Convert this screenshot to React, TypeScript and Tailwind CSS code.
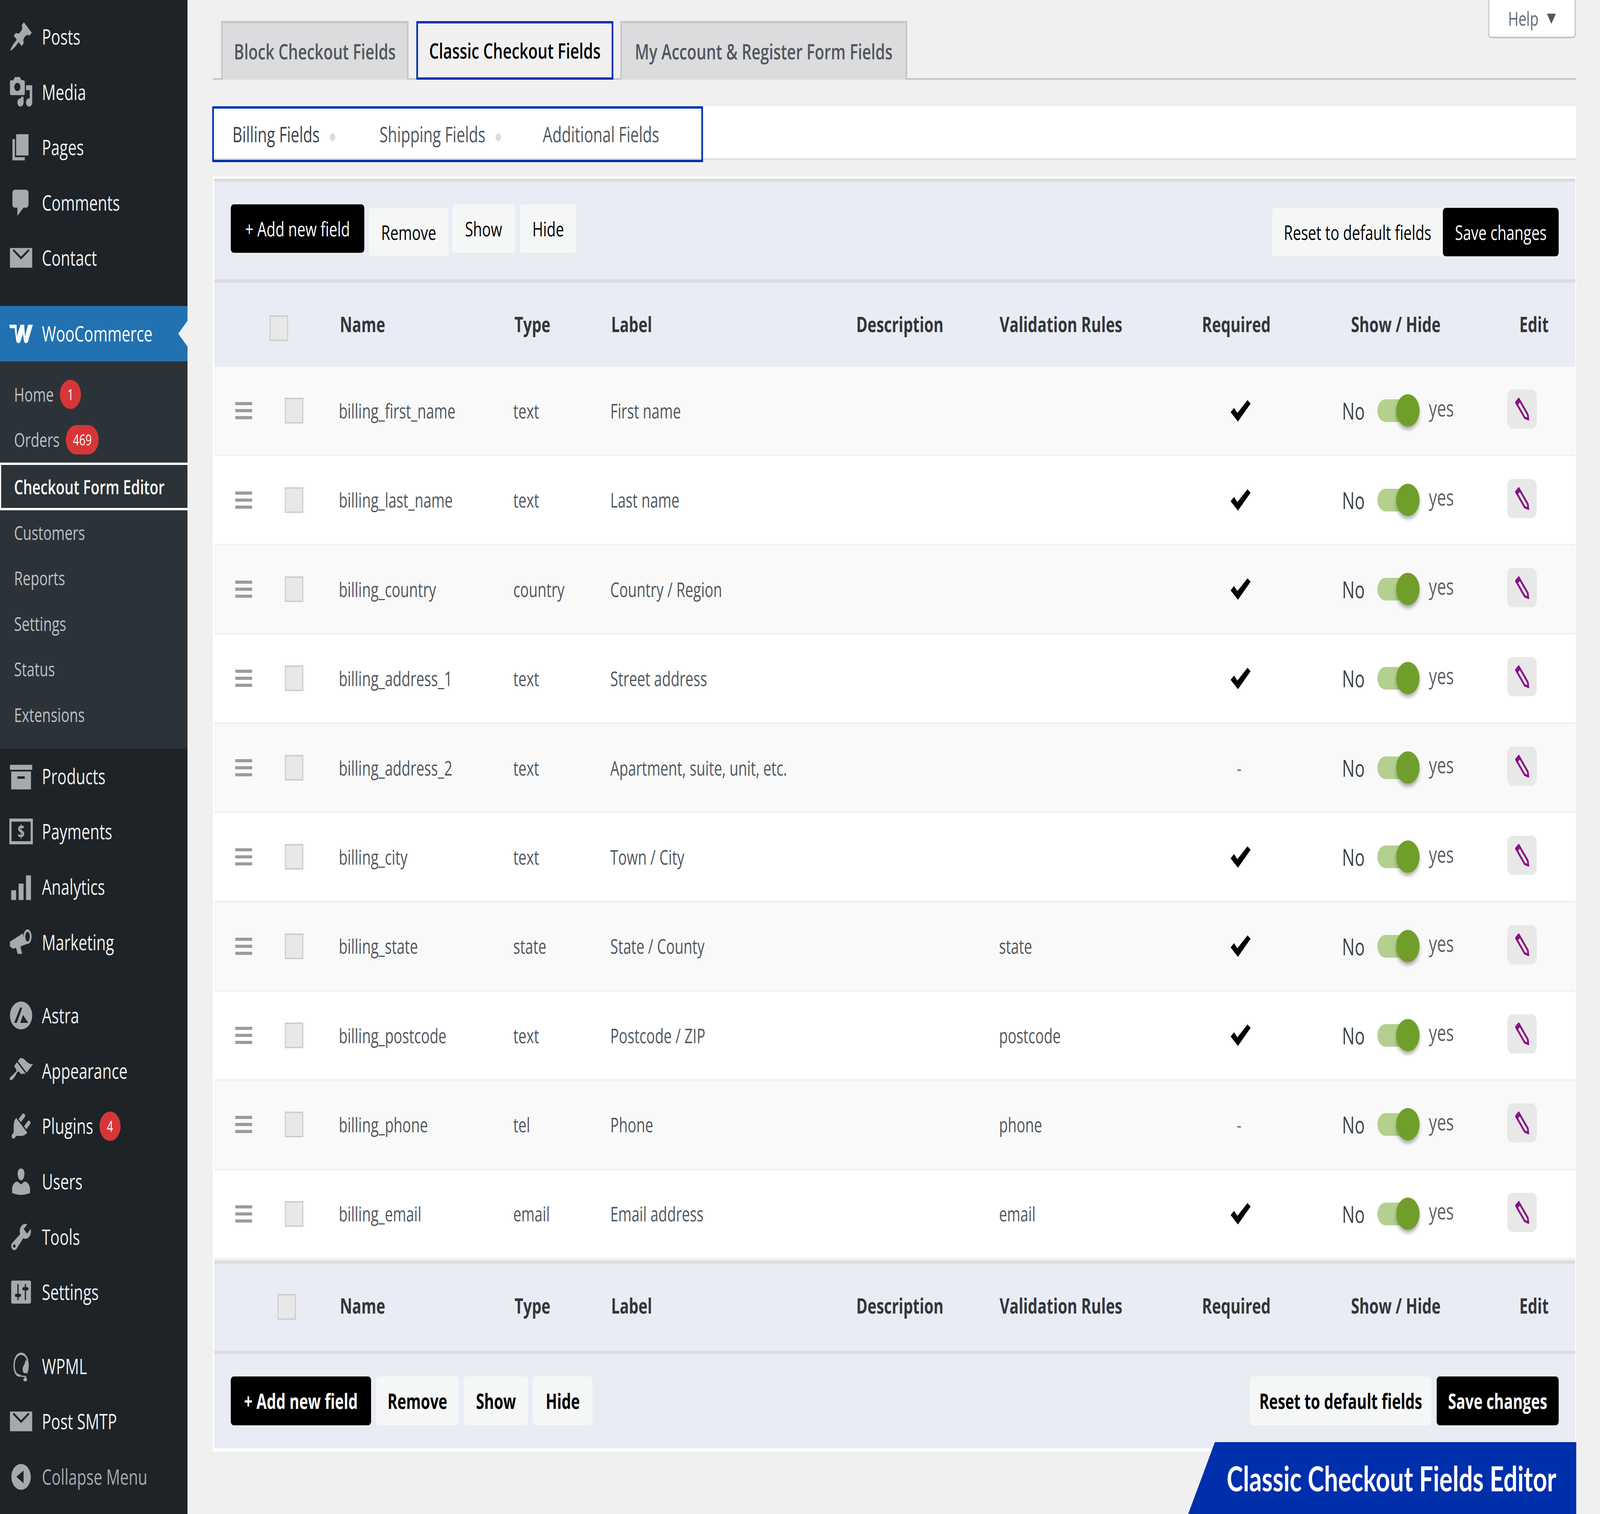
import type { ReactNode } from "react";

const paths: Record<string, string> = {
  posts:
    "M10.44 3.02l1.82-1.82 6.36 6.35-1.83 1.82c-1.05-.68-2.48-.57-3.41.36l-.75.75c-.92.93-1.04 2.35-.35 3.41l-1.83 1.82-2.41-2.41-2.8 2.79c-.42.42-3.38 2.71-3.8 2.29s1.86-3.39 2.28-3.81l2.79-2.79L4.1 9.36l1.83-1.82c1.05.69 2.48.57 3.4-.36l.75-.75c.93-.92 1.05-2.35.36-3.41z",
  media:
    "M13 11V4c0-.55-.45-1-1-1h-1.67L9 1H5L3.67 3H2c-.55 0-1 .45-1 1v7c0 .55.45 1 1 1h10c.55 0 1-.45 1-1zM7 4.5c1.38 0 2.5 1.12 2.5 2.5S8.38 9.5 7 9.5 4.5 8.38 4.5 7 5.62 4.5 7 4.5zM14 6h5v10.5c0 1.38-1.12 2.5-2.5 2.5S14 17.88 14 16.5s1.12-2.5 2.5-2.5c.17 0 .34.02.5.05V9h-3V6zm-4 8.05V13h2v3.5c0 1.38-1.12 2.5-2.5 2.5S7 17.88 7 16.5 8.12 14 9.5 14c.17 0 .34.02.5.05z",
  pages: "M6 15V2h10v13H6zm-1 1h8v2H3V5h2v11z",
  comments:
    "M5 2h9c1.1 0 2 .9 2 2v7c0 1.1-.9 2-2 2h-2l-5 5v-5H5c-1.1 0-2-.9-2-2V4c0-1.1.9-2 2-2z",
  email:
    "M1 4h18v12H1zM3.200 5.600l6.800 5.400 6.800-5.400-.9-.9-5.900 4.600-5.900-4.600z",
  products: "M19 3v3H1V3h18zM2 7h16v11H2V7zm5 3v1.500h6V10H7z",
  analytics: "M2 12h4v6H2zM8 8h4v10H8zM14 3h4v15h-4z",
  marketing:
    "M1 9.500L11.500 4.500c.4 3 1.400 5 3 6.500l-5 1.500 1.300 4.500H7.300l-1.400-3.700-2.400.6L1 12.500zM12 6.500c0-2.400 1.400-4.500 3.200-4.500s3.300 2.100 3.300 4.500-1.500 4.500-3.300 4.500S12 8.900 12 6.500zm1.400 0c0 1.600.8 3 1.800 3s1.900-1.400 1.900-3-.9-3-1.900-3-1.800 1.400-1.800 3z",
  astra:
    "M10 1.500a9 8.500 0 100 17 9 8.500 0 000-17zM9.200 5.200h1.800L6.600 14.500H4.400zM11.600 9.700l4.200 4.800H9.300z",
  appearance:
    "M14.480 11.060L7.410 3.990l1.500-1.500c.5-.56 2.300-.47 3.510.32 1.210.8 1.430 1.280 2.910 2.100 1.180.64 2.450 1.260 4.450.85zm-.71.71L6.700 4.700 4.930 6.470c-.39.39-.39 1.020 0 1.410l1.060 1.060c.39.39.39 1.030 0 1.420-.6.6-1.430 1.110-2.210 1.690-.35.26-.7.53-1.010.84C1.430 13.230.4 14.750 1.100 15.500c.7.7 2.200-.35 3.500-1.670.3-.3.57-.65.83-1 .58-.78 1.090-1.610 1.690-2.210.39-.39 1.020-.39 1.410 0l1.060 1.060c.39.39 1.030.39 1.420 0z",
  plugins:
    "M13.110 4.360L9.870 7.600 8 5.730l3.240-3.240c.35-.34 1.050-.2 1.560.32.52.51.66 1.210.31 1.550zm-8 1.770l.91-1.120 9.010 9.010-1.190.84c-.71.71-2.630 1.160-3.820 1.160H6.140L4.900 17.260c-.59.59-1.540.59-2.120 0-.59-.58-.59-1.530 0-2.120l1.240-1.240v-3.880c0-1.130.4-3.190 1.090-3.890zm7.260 3.970l3.240-3.240c.34-.35 1.040-.21 1.550.31.52.51.66 1.210.31 1.550l-3.240 3.250z",
  users:
    "M10 9.250c-2.270 0-2.730-3.440-2.730-3.440C7 4.020 7.820 2 9.970 2c2.160 0 2.980 2.020 2.710 3.810 0 0-.41 3.440-2.680 3.440zm0 2.570L12.720 10c2.390 0 4.520 2.330 4.520 4.530v2.490s-3.650 1.130-7.240 1.130c-3.650 0-7.240-1.130-7.240-1.130v-2.490c0-2.250 1.940-4.480 4.470-4.480z",
  tools:
    "M16.680 9.770c-1.340 1.340-3.300 1.670-4.950.99l-5.410 6.520c-.99.99-2.590.99-3.580 0s-.99-2.590 0-3.570l6.520-5.420c-.68-1.650-.35-3.610.99-4.950 1.280-1.280 3.120-1.620 4.720-1.060l-2.890 2.890 2.820 2.820 2.860-2.870c.53 1.580.18 3.390-1.080 4.650zM3.810 16.210c.4.39 1.040.39 1.430 0 .4-.4.4-1.040 0-1.430-.39-.4-1.030-.4-1.430 0-.39.39-.39 1.030 0 1.430z",
  settings:
    "M18 16V4c0-.55-.45-1-1-1H3c-.55 0-1 .45-1 1v12c0 .55.45 1 1 1h14c.55 0 1-.45 1-1zM8 11h1c.55 0 1 .45 1 1s-.45 1-1 1H8v1.500c0 .28-.22.5-.5.5s-.5-.22-.5-.5V13H6c-.55 0-1-.45-1-1s.45-1 1-1h1V5.500c0-.28.22-.5.5-.5s.5.22.5.5V11zm5-2h-1c-.55 0-1-.45-1-1s.45-1 1-1h1V5.500c0-.28.22-.5.5-.5s.5.22.5.5V7h1c.55 0 1 .45 1 1s-.45 1-1 1h-1v5.500c0 .28-.22.5-.5.5s-.5-.22-.5-.5V9z",
  collapse:
    "M10 2.160c4.330 0 7.840 3.510 7.840 7.840s-3.510 7.840-7.840 7.840S2.160 14.330 2.160 10 5.710 2.160 10 2.160zm2 11.720V6.120L6.180 9.970z",
};

function MenuIcon({ name }: { name: string }) {
  if (name === "woo") {
    return (
      <svg viewBox="0 0 84 50" className="ml-[2px] h-[50px] w-[84px]" fill="#fff">
        <path d="M0 2h26l1 30L40 2h13l3 30L67 2h17L66 46c-3 5-12 4-14-2l-3-18-10 20c-3 5-12 4-14-2L19 11H4c-3 0-4-5-4-9z" />
      </svg>
    );
  }
  if (name === "payments") {
    return (
      <svg viewBox="0 0 84 66" className="ml-[2px] h-[66px] w-[84px]">
        <rect x="4" y="4" width="76" height="58" fill="none" stroke="#a7aaad" strokeWidth="8" />
        <text x="42" y="49" textAnchor="middle" fontSize="44" fontWeight="700" fontFamily="'Open Sans', sans-serif" fill="#a7aaad">
          $
        </text>
      </svg>
    );
  }
  if (name === "wpml") {
    return (
      <svg viewBox="0 0 20 20" className="ml-[13px] h-[80px] w-[62px]" preserveAspectRatio="none">
        <path d="M9 16C4.500 16 2 13.500 2 9.500S5 2 10 2s8 3 8 7.500c0 2-.6 3.800-2 5" fill="none" stroke="#a7aaad" strokeWidth="1.500" />
        <path d="M18 9c0 3-1.500 5-3.500 5.500-2.500 0-3.500-2.500-2-4.500 1-1 2-1.500 2.500-4 2 .5 3 1.500 3 3z" fill="#a7aaad" />
        <path d="M9 16c2 .5 5 .5 7 .5M13 18.500c1-1.500 3-1.500 3.500 0-.5 1-3 1-3.500 0z" fill="#a7aaad" stroke="#a7aaad" strokeWidth=".8" />
      </svg>
    );
  }
  return (
    <svg viewBox="0 0 20 20" className="h-[84px] w-[88px]" preserveAspectRatio="none" fill="#a7aaad">
      <path d={paths[name]} fillRule={name === "astra" || name === "email" ? "evenodd" : undefined} />
    </svg>
  );
}

function Badge({ children, wide }: { children: string; wide?: boolean }) {
  return (
    <span
      className={`ml-[22px] flex h-[75px] items-center justify-center rounded-full bg-[#d63638] text-[39px] text-white ${
        wide ? "w-[117px]" : "w-[75px]"
      }`}
    >
      {children}
    </span>
  );
}

function MenuItem({
  icon,
  label,
  badge,
  dim,
}: {
  icon: string;
  label: string;
  badge?: string;
  dim?: boolean;
}) {
  return (
    <div className="flex h-[141.6px] items-center">
      <span className="flex w-[149px] shrink-0 pl-[31px]">
        <MenuIcon name={icon} />
      </span>
      <span className={dim ? "text-[#a7aaad]" : "text-[#f0f0f1]"}>{label}</span>
      {badge && <Badge>{badge}</Badge>}
    </div>
  );
}

function SubItem({ label, badge }: { label: string; badge?: string }) {
  return (
    <div className="flex h-[116.500px] items-center pl-[50px] text-[#bcc0c4]">
      {label}
      {badge && <Badge wide={badge.length > 1}>{badge}</Badge>}
    </div>
  );
}

function Sidebar() {
  return (
    <aside className="relative z-10 w-[667px] shrink-0 bg-[#1d2327] text-[54.500px]">
      <div className="pt-[23px]">
        <MenuItem icon="posts" label="Posts" />
        <MenuItem icon="media" label="Media" />
        <MenuItem icon="pages" label="Pages" />
        <MenuItem icon="comments" label="Comments" />
        <MenuItem icon="email" label="Contact" />
      </div>
      <div className="relative mt-[52px] flex h-[142px] items-center bg-[#2271b1] text-white">
        <span className="flex w-[149px] shrink-0 pl-[31px]">
          <MenuIcon name="woo" />
        </span>
        WooCommerce
        <span className="absolute right-0 top-[38px] h-0 w-0 border-y-[33px] border-r-[33px] border-y-transparent border-r-[#f0f0f1]" />
      </div>
      <div className="h-[991px] bg-[#2c3338] pt-[26px] text-[50px]">
        <SubItem label="Home" badge="1" />
        <SubItem label="Orders" badge="469" />
        <div className="-mb-px flex h-[122px] w-[671px] items-center border-x-[4px] border-y-[6px] border-white pl-[46px] text-[51px] font-semibold text-white">
          Checkout Form Editor
        </div>
        <SubItem label="Customers" />
        <SubItem label="Reports" />
        <SubItem label="Settings" />
        <SubItem label="Status" />
        <SubItem label="Extensions" />
      </div>
      <div>
        <MenuItem icon="products" label="Products" />
        <MenuItem icon="payments" label="Payments" />
        <MenuItem icon="analytics" label="Analytics" />
        <MenuItem icon="marketing" label="Marketing" />
      </div>
      <div className="mt-[46px]">
        <MenuItem icon="astra" label="Astra" />
        <MenuItem icon="appearance" label="Appearance" />
        <MenuItem icon="plugins" label="Plugins" badge="4" />
        <MenuItem icon="users" label="Users" />
        <MenuItem icon="tools" label="Tools" />
        <MenuItem icon="settings" label="Settings" />
      </div>
      <div className="mt-[48px]">
        <MenuItem icon="wpml" label="WPML" />
        <MenuItem icon="email" label="Post SMTP" />
        <MenuItem icon="collapse" label="Collapse Menu" dim />
      </div>
    </aside>
  );
}

const cols =
  "grid grid-cols-[251px_192px_621px_345px_875px_508px_722px_498px_588px_242px]";

const fields = [
  { name: "billing_first_name", type: "text", label: "First name", rule: "", req: true },
  { name: "billing_last_name", type: "text", label: "Last name", rule: "", req: true },
  { name: "billing_country", type: "country", label: "Country / Region", rule: "", req: true },
  { name: "billing_address_1", type: "text", label: "Street address", rule: "", req: true },
  { name: "billing_address_2", type: "text", label: "Apartment, suite, unit, etc.", rule: "", req: false },
  { name: "billing_city", type: "text", label: "Town / City", rule: "", req: true },
  { name: "billing_state", type: "state", label: "State / County", rule: "state", req: true },
  { name: "billing_postcode", type: "text", label: "Postcode / ZIP", rule: "postcode", req: true },
  { name: "billing_phone", type: "tel", label: "Phone", rule: "phone", req: false },
  { name: "billing_email", type: "email", label: "Email address", rule: "email", req: true },
];

function CheckBox({ className = "" }: { className?: string }) {
  return (
    <span className={`block h-[66px] w-[66px] border-[4px] border-[#cfcfd0] bg-[#e8e8e8] ${className}`} />
  );
}

function HeadRow({ boxOffset, textShift }: { boxOffset: string; textShift: string }) {
  return (
    <div className={`${cols} items-center bg-[#e9ecf4] text-[54px] font-bold text-[#32373c]`}>
      <div className={boxOffset}>
        <CheckBox />
      </div>
      <div />
      <div className={`pl-1 ${textShift}`}>Name</div>
      <div className={`pl-1 ${textShift}`}>Type</div>
      <div className={`pl-[3px] ${textShift}`}>Label</div>
      <div className={textShift}>Description</div>
      <div className={`pl-[2px] ${textShift}`}>Validation Rules</div>
      <div className={textShift}>Required</div>
      <div className={`pl-[32px] ${textShift}`}>Show / Hide</div>
      <div className={`pl-[43px] ${textShift}`}>Edit</div>
    </div>
  );
}

function CheckMark() {
  return (
    <svg viewBox="0 0 71 55" className="h-[55px] w-[71px]" fill="#000">
      <path d="M0 31l12-11 12 13L60 0l11 9-45 46z" />
    </svg>
  );
}

function Pencil() {
  return (
    <svg viewBox="0 0 50 58" className="h-[58px] w-[50px]" fill="none" stroke="#8a0b85" strokeWidth="6">
      <path d="M3 12L13 3l32 40 2 12-13-4zM5 18l12-10" />
    </svg>
  );
}

function Row({ f, odd }: { f: (typeof fields)[number]; odd: boolean }) {
  return (
    <div
      className={`${cols} h-[228.400px] items-center border-b-[4px] border-[#f0f0f1] text-[51px] text-[#50575e] ${
        odd ? "bg-[#f9f9f9]" : "bg-white"
      }`}
    >
      <div className="flex flex-col gap-[10px] pl-[75px]">
        <span className="h-[8px] w-[60px] bg-[#9b9b9b]" />
        <span className="h-[8px] w-[60px] bg-[#9b9b9b]" />
        <span className="h-[8px] w-[60px] bg-[#9b9b9b]" />
      </div>
      <CheckBox />
      <div>{f.name}</div>
      <div>{f.type}</div>
      <div className="whitespace-nowrap">{f.label}</div>
      <div />
      <div>{f.rule}</div>
      <div className="flex pl-[102px]">
        {f.req ? <CheckMark /> : <span className="pl-[22px] text-[#6b7075]">-</span>}
      </div>
      <div className="flex items-center">
        <span className="w-[126px] text-[60px] text-[#3c434a]">No</span>
        <span className="relative h-[58px] w-[150px] rounded-full bg-[#b3d08f]">
          <span className="absolute -top-[13px] right-0 h-[83px] w-[83px] rounded-full bg-[#6f9f2a] shadow-[0_8px_10px_rgba(0,0,0,0.3)]" />
        </span>
        <span className="-mt-[16px] ml-[33px] text-[58px] text-[#5a6068]">yes</span>
      </div>
      <div className="-mt-[8px]">
        <span className="flex h-[100px] w-[105px] items-center justify-center rounded-[18px] bg-[#e8e8e8]">
          <Pencil />
        </span>
      </div>
    </div>
  );
}

function Btn({
  children,
  className,
  dark,
}: {
  children: ReactNode;
  className: string;
  dark?: boolean;
}) {
  return (
    <span
      className={`flex items-center justify-center rounded-[10px] ${
        dark ? "bg-black text-white" : "bg-[#f5f7f7] text-black"
      } ${className}`}
    >
      {children}
    </span>
  );
}

function MainTab({ children, className }: { children: string; className: string }) {
  return (
    <span className={`flex h-[150px] items-center justify-center ${className}`}>{children}</span>
  );
}

export default function App() {
  // the layout is drawn at the reference size and fitted to the window it actually gets
  const fit = `scale(${window.innerWidth / 5692}, ${window.innerHeight / 3875})`;

  return (
    <div className="h-screen w-screen overflow-hidden bg-[#f0f0f1]">
      <div
        className="flex h-[3875px] w-[5692px] origin-top-left bg-[#f0f0f1] font-['Open_Sans',sans-serif]"
        style={{ transform: fit }}
      >
        <Sidebar />
        <main className="relative flex-1 pl-[90px]">
          <div className="absolute right-[86px] top-0 flex h-[98px] w-[312px] items-center justify-center gap-[30px] rounded-b-[12px] border-x-[4px] border-b-[4px] border-[#c3c4c7] bg-white text-[50px] text-[#646970]">
            Help
            <span className="mt-[2px] h-0 w-0 border-x-[16px] border-t-[26px] border-x-transparent border-t-[#50575e]" />
          </div>

          <div className="w-[4850px]">
            <div className="pt-[54px]">
              <div className="ml-px flex border-b-[4px] border-[#c3c4c7] pl-[29px] text-[55px] font-semibold">
                <MainTab className="-mb-[4px] w-[666px] border-[5px] border-b-0 border-[#c3c4c7] bg-[#dcdcde] text-[#50575e]">
                  Block Checkout Fields
                </MainTab>
                <MainTab className="-mb-[4px] ml-[28px] w-[701px] border-[6px] border-[#0033b0] text-black">
                  Classic Checkout Fields
                </MainTab>
                <MainTab className="-mb-[4px] ml-[25px] w-[1020px] border-[5px] border-b-0 border-[#c3c4c7] bg-[#dcdcde] text-[#50575e]">
                  My Account &amp; Register Form Fields
                </MainTab>
              </div>
            </div>

            <div className="ml-px mt-[70px] h-[137px] border-b-[4px] border-[#dcdcde] bg-white">
              <div className="-ml-[3px] -mt-[2px] flex h-[143px] w-[1746px] items-center border-[6px] border-[#0033b0] pl-[66px] text-[54px] text-[#50575e]">
                <span className="flex w-[523px] items-center font-medium text-[#3c434a]">
                  Billing Fields
                  <span className="ml-[36px] mt-[14px] h-[20px] w-[20px] rounded-full bg-[#dcdcde]" />
                </span>
                <span className="flex w-[581px] items-center">
                  Shipping Fields
                  <span className="ml-[36px] mt-[14px] h-[20px] w-[20px] rounded-full bg-[#dcdcde]" />
                </span>
                <span>Additional Fields</span>
              </div>
            </div>

            <div className="mt-[43px] border-b-[8px] border-l-[5px] border-r-[3px] border-t-[5px] border-white">
              <div className="flex h-[266px] border-y-[8px] border-[#dcdcde] bg-[#e9ecf4] px-[59px] text-[52px]">
                <Btn dark className="mt-[58px] h-[124px] w-[475px]">+ Add new field</Btn>
                <Btn className="ml-[16px] mt-[67px] h-[124px] w-[284px]">Remove</Btn>
                <Btn className="ml-[13px] mt-[58px] h-[124px] w-[223px]">Show</Btn>
                <Btn className="ml-[18px] mt-[58px] h-[124px] w-[200px]">Hide</Btn>
                <div className="flex-1" />
                <Btn className="mt-[67px] h-[124px] w-[607px] rounded-r-none">Reset to default fields</Btn>
                <Btn dark className="mt-[67px] h-[124px] w-[412px]">Save changes</Btn>
              </div>
              <div className="h-[216px] [&>div]:h-full">
                <HeadRow boxOffset="pl-[197px] pt-[18px]" textShift="-mt-[4px]" />
              </div>
              {fields.map((f, i) => (
                <Row key={f.name} f={f} odd={i % 2 === 0} />
              ))}
              <div className="mt-[3px] h-[239px] border-y-[8px] border-[#dcdcde] [&>div]:h-full">
                <HeadRow boxOffset="pl-[225px]" textShift="-mt-[8px]" />
              </div>
              <div className="flex h-[242px] bg-[#e9ecf4] px-[59px] pt-[58px] text-[53px] font-bold">
                <Btn dark className="h-[125px] w-[499px]">+ Add new field</Btn>
                <Btn className="ml-[18px] h-[125px] w-[294px]">Remove</Btn>
                <Btn className="ml-[18px] h-[125px] w-[229px]">Show</Btn>
                <Btn className="ml-[17px] h-[125px] w-[212px]">Hide</Btn>
                <div className="flex-1" />
                <Btn className="h-[125px] w-[645px]">Reset to default fields</Btn>
                <Btn dark className="ml-[19px] h-[125px] w-[434px]">Save changes</Btn>
              </div>
            </div>
          </div>

          <div className="absolute bottom-0 right-[84px] flex h-[184px] w-[1381px] items-center bg-[#002fac] pl-[137px] font-['Lato',sans-serif] text-[88px] font-bold text-white [clip-path:polygon(95px_0,100%_0,100%_100%,0_100%)]">
            Classic Checkout Fields Editor
          </div>
        </main>
      </div>
    </div>
  );
}
